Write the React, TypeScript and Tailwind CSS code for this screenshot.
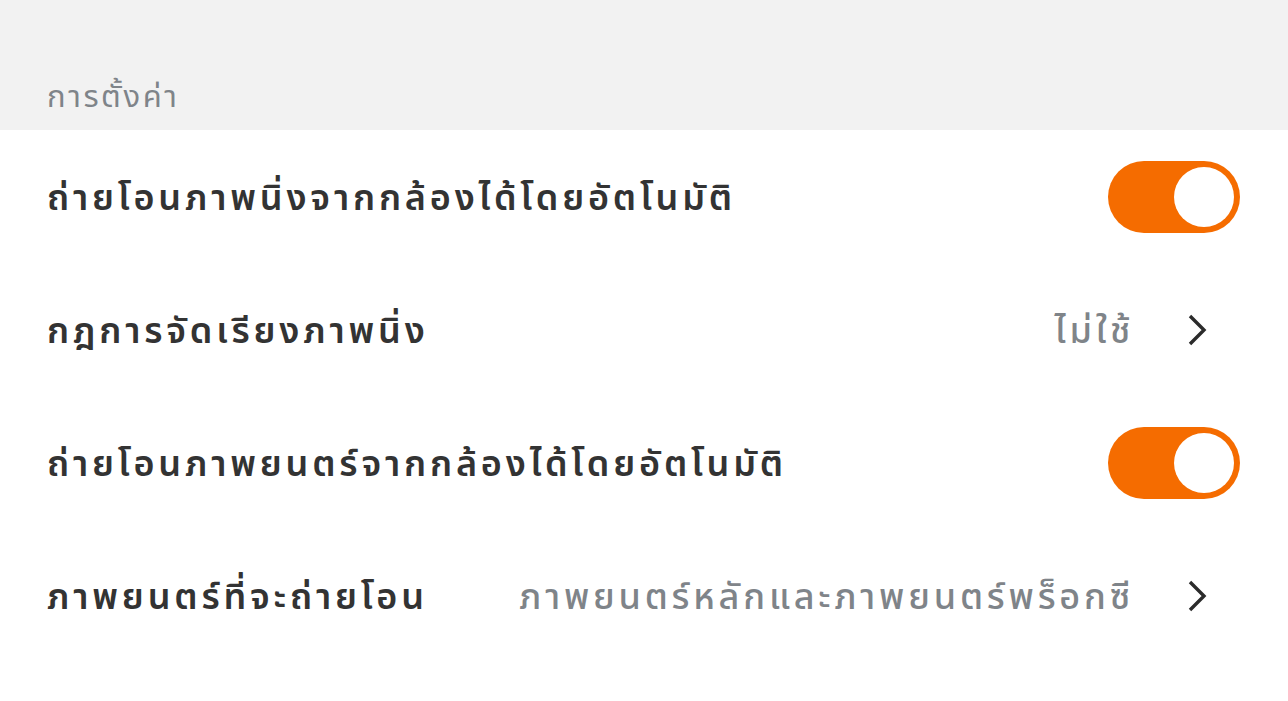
import React from "react";

const font = { fontFamily: '"Noto Sans", "Noto Sans Thai", Tahoma, "DejaVu Sans", sans-serif' };

function Toggle() {
  return (
    <div className="w-[132px] h-[72px] rounded-full bg-[#f56c00] flex items-center justify-end pr-[6px] shrink-0">
      <div className="w-[60px] h-[60px] rounded-full bg-white" />
    </div>
  );
}

function Chevron() {
  return (
    <svg width="22" height="34" viewBox="0 0 22 34" className="shrink-0">
      <path d="M4 3 L18 17 L4 31" fill="none" stroke="#2b2b2b" strokeWidth="3.4" strokeLinejoin="miter" />
    </svg>
  );
}

interface RowProps {
  label: string;
  value?: string;
  toggle?: boolean;
}

function Row({ label, value, toggle }: RowProps) {
  return (
    <div className="h-[133px] flex items-center pl-[47px] pr-[48px]">
      <div className="text-[36px] tracking-[3.8px] font-semibold text-[#333333] whitespace-nowrap">{label}</div>
      <div className="flex-1" />
      {toggle ? (
        <Toggle />
      ) : (
        <div className="flex items-center gap-[52px] pr-[32px]">
          <div className="text-[36px] tracking-[3.8px] font-medium text-[#7f8489] whitespace-nowrap">{value}</div>
          <Chevron />
        </div>
      )}
    </div>
  );
}

export default function App() {
  return (
    <div className="w-[1288px] h-[701px] bg-white" style={font}>
      <div className="h-[130px] bg-[#f2f2f2] flex items-end pl-[47px] pb-[12px]">
        <span className="text-[31px] tracking-[2.6px] text-[#7f8489]">การตั้งค่า</span>
      </div>
      <Row label="ถ่ายโอนภาพนิ่งจากกล้องได้โดยอัตโนมัติ" toggle />
      <Row label="กฎการจัดเรียงภาพนิ่ง" value="ไม่ใช้" />
      <Row label="ถ่ายโอนภาพยนตร์จากกล้องได้โดยอัตโนมัติ" toggle />
      <Row label="ภาพยนตร์ที่จะถ่ายโอน" value="ภาพยนตร์หลักและภาพยนตร์พร็อกซี" />
    </div>
  );
}
